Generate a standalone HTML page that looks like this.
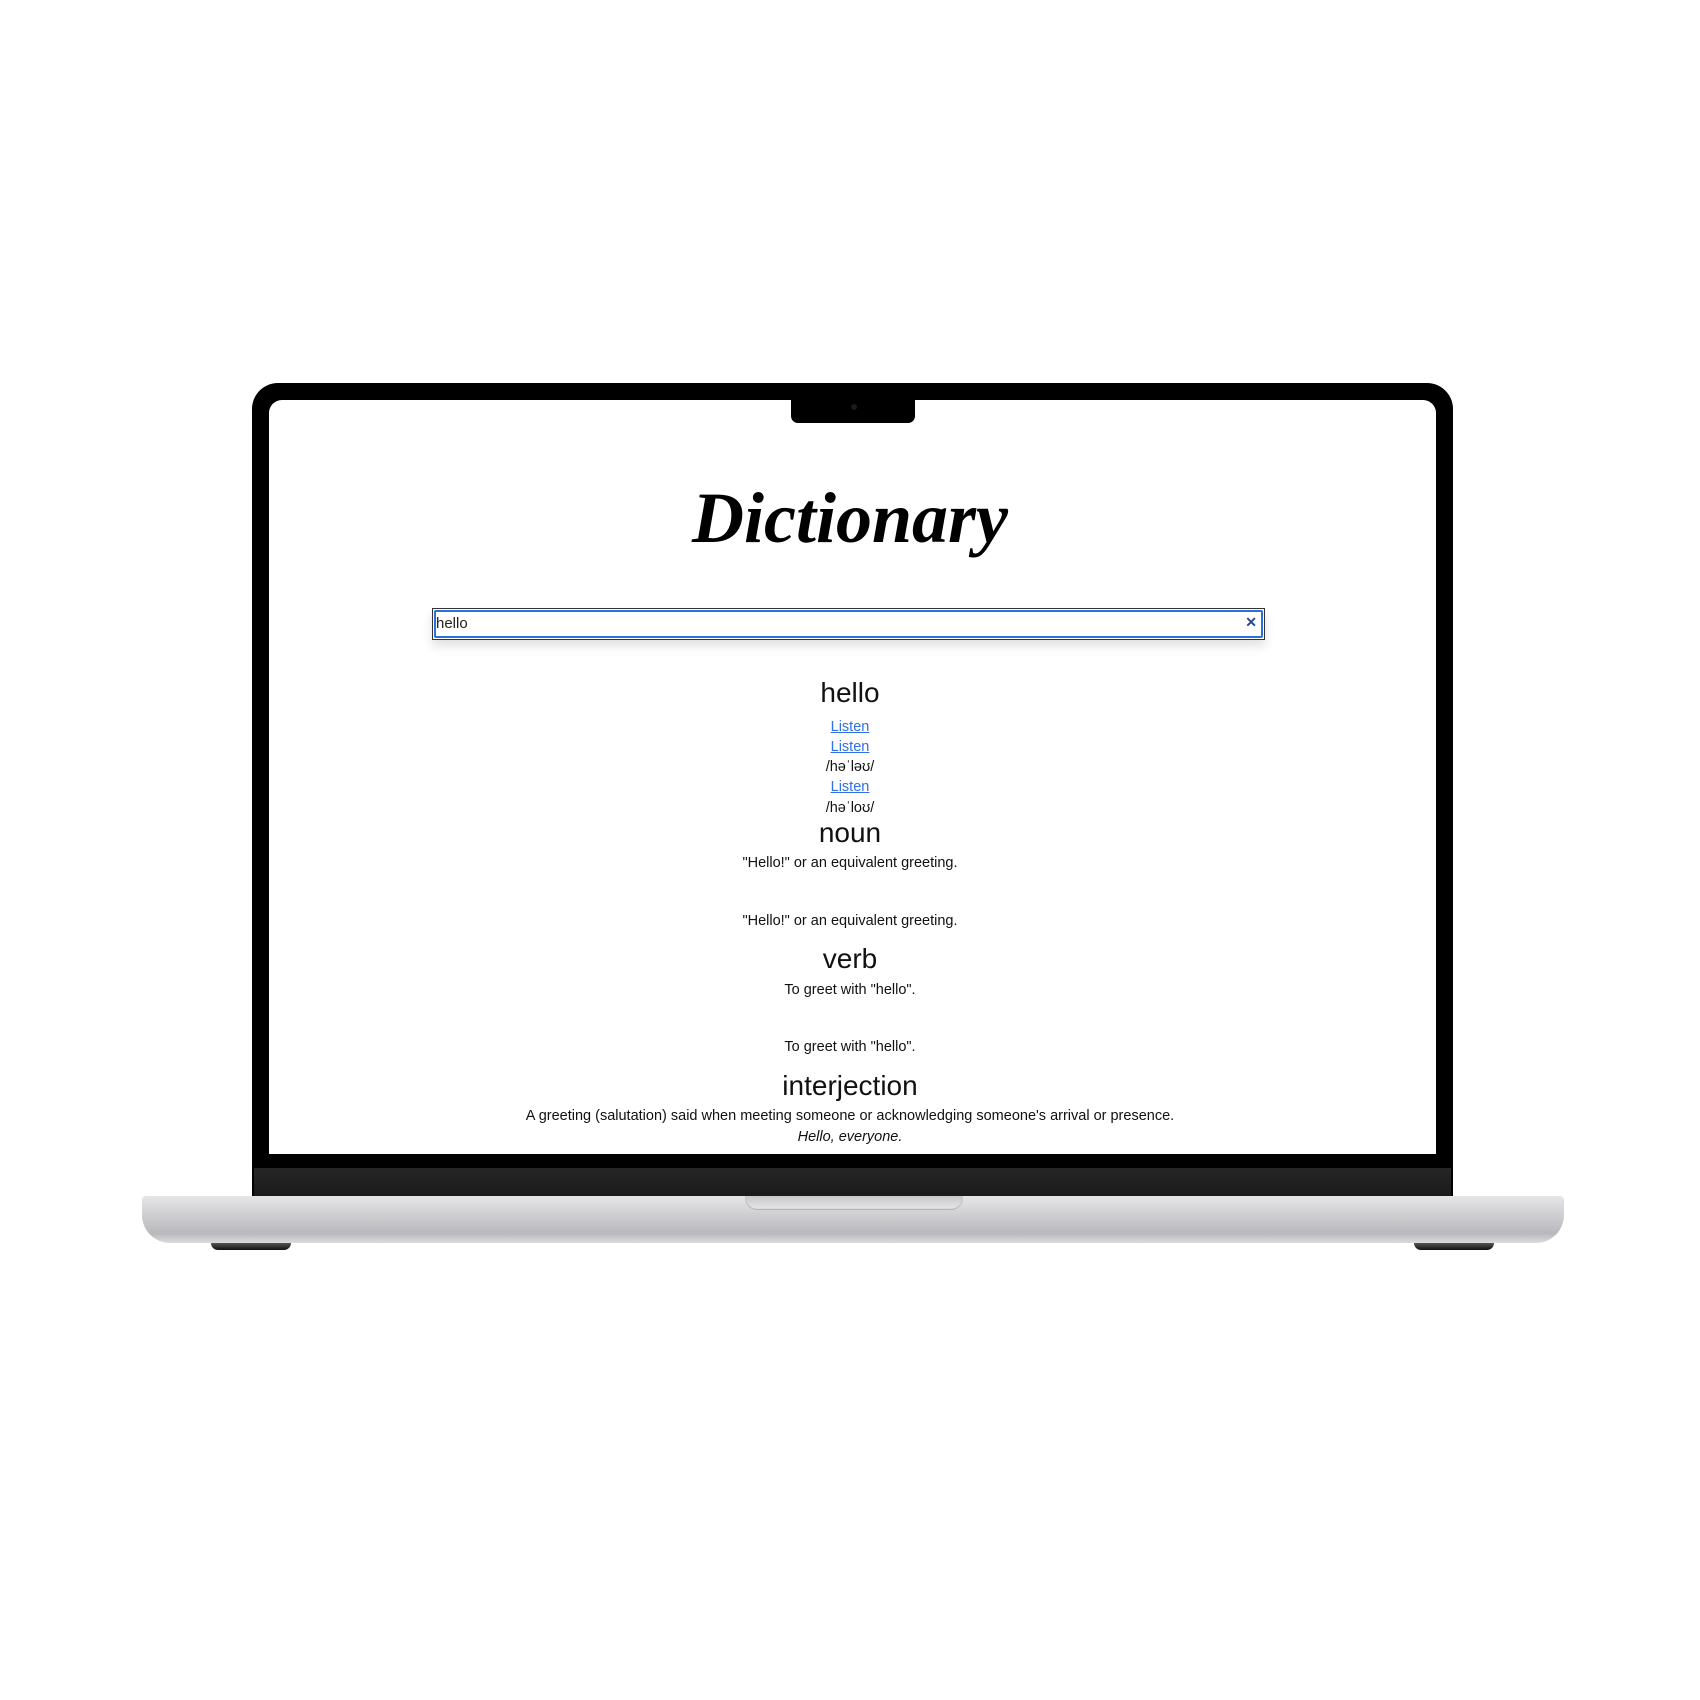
<!DOCTYPE html>
<html><head><meta charset="utf-8"><style>
*{margin:0;padding:0;box-sizing:border-box}
body{width:1700px;height:1700px;background:#fff;position:relative;overflow:hidden;font-family:"Liberation Sans",sans-serif}
.a{position:absolute}
.lid{left:252px;top:383px;width:1201px;height:820px;background:#000;border-radius:26px 26px 0 0}
.scr{left:269px;top:400px;width:1167px;height:754px;background:#fff;border-radius:13px 13px 0 0}
.notch{left:791px;top:400px;width:124px;height:23px;background:#000;border-radius:0 0 7px 7px}
.cam{left:851px;top:404px;width:6px;height:6px;border-radius:50%;background:#1a1a22}
.chin{left:254px;top:1168px;width:1197px;height:30px;background:linear-gradient(#262626,#1a1a1a)}
.base{left:142px;top:1196px;width:1422px;height:47px;border-radius:4px 4px 28px 28px;background:linear-gradient(#e6e6e8,#cfcfd2 40%,#b9b9bd 80%,#dcdcdc)}
.cut{left:745px;top:1196px;width:218px;height:14px;background:linear-gradient(#c8c8cc,#e8e8ea);border-radius:0 0 12px 12px;box-shadow:inset 0 -1px 1px #aaa}
.foot{top:1243px;width:80px;height:7px;background:linear-gradient(#555,#111);border-radius:0 0 8px 8px}
.t{left:350px;width:1000px;text-align:center;color:#111;white-space:nowrap}
h1{position:absolute;left:350px;width:1000px;top:476px;text-align:center;font:italic bold 72px "Liberation Serif",serif;color:#000;line-height:84px}
.srch{left:432px;top:608px;width:833px;height:32px;border:1px solid #333;box-shadow:0 6px 10px rgba(0,0,0,.12)}
.srch .in{position:absolute;inset:1px;border:2px solid #2a6fdb;border-radius:2px}
.srch span{position:absolute;left:3px;top:6px;font-size:15px;color:#222}
.srch b{position:absolute;right:7px;top:5px;font-size:14px;color:#2a4a8a}
a{color:#2f6fe8;text-decoration:underline}
.s{font-size:14.5px;line-height:20px}
.h{font-size:28px;line-height:34px;font-weight:300}
</style></head><body>
<div class="a lid"></div>
<div class="a scr"></div>
<div class="a notch"></div>
<div class="a cam"></div>
<div class="a chin"></div>
<div class="a base"></div>
<div class="a cut"></div>
<div class="a foot" style="left:211px"></div>
<div class="a foot" style="left:1414px"></div>
<h1>Dictionary</h1>
<div class="a srch"><div class="in"></div><span>hello</span><b>✕</b></div>
<div class="a t h" style="top:676px">hello</div>
<div class="a t s" style="top:717px"><a>Listen</a></div>
<div class="a t s" style="top:737px"><a>Listen</a></div>
<div class="a t s" style="top:757px">/həˈləʊ/</div>
<div class="a t s" style="top:777px"><a>Listen</a></div>
<div class="a t s" style="top:798px">/həˈloʊ/</div>
<div class="a t h" style="top:816px">noun</div>
<div class="a t s" style="top:853px">"Hello!" or an equivalent greeting.</div>
<div class="a t s" style="top:911px">"Hello!" or an equivalent greeting.</div>
<div class="a t h" style="top:942px">verb</div>
<div class="a t s" style="top:980px">To greet with "hello".</div>
<div class="a t s" style="top:1037px">To greet with "hello".</div>
<div class="a t h" style="top:1069px">interjection</div>
<div class="a t s" style="top:1106px">A greeting (salutation) said when meeting someone or acknowledging someone's arrival or presence.</div>
<div class="a t s" style="top:1127px;font-style:italic">Hello, everyone.</div>
</body></html>
